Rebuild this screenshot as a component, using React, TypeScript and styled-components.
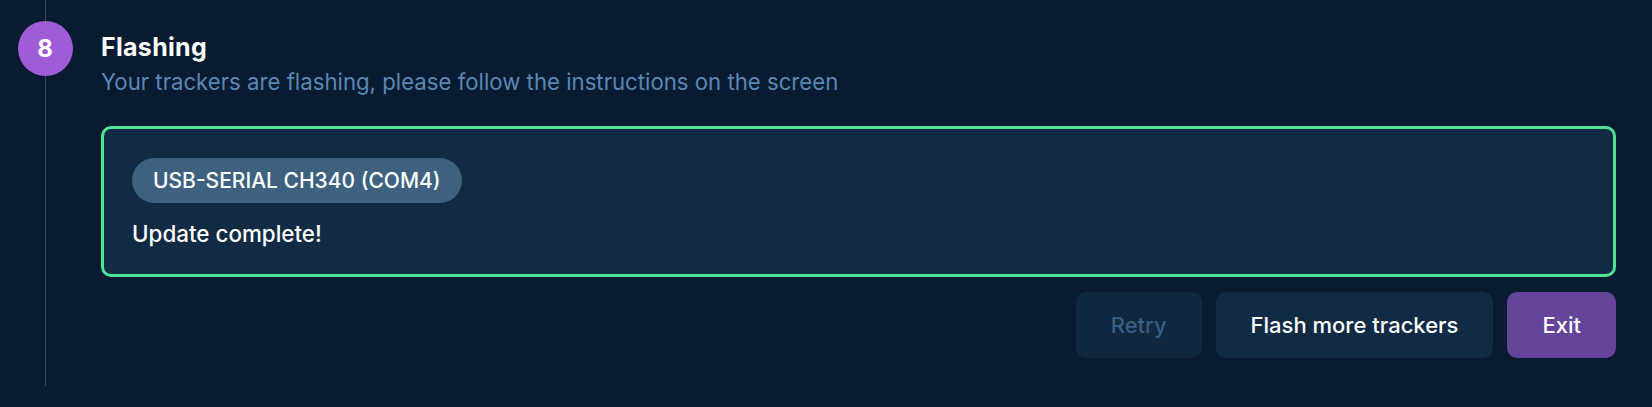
import React from "react";
import styled, { createGlobalStyle } from "styled-components";

const Global = createGlobalStyle`
  html, body {
    margin: 0;
    padding: 0;
    background: #081b30;
  }
  body {
    font-family: Inter, "Noto Sans", sans-serif;
    color: #ffffff;
  }
`;

const Page = styled.div`
  width: 1652px;
  height: 407px;
  box-sizing: border-box;
  padding: 0 36px 21px 0;
  background: #081b30;
  display: grid;
  grid-template-columns: 90px 1fr;
  column-gap: 11px;
`;

const Timeline = styled.div`
  display: flex;
  flex-direction: column;
  align-items: center;
`;

const Line = styled.div<{ $h?: number }>`
  width: 1px;
  background: #37465d;
  ${(p) => (p.$h ? `height: ${p.$h}px;` : `flex: 1;`)}
`;

const StepCircle = styled.div`
  width: 55px;
  height: 55px;
  border-radius: 50%;
  background: #a05bd6;
  color: #ffffff;
  font-weight: 700;
  font-size: 24px;
  display: flex;
  align-items: center;
  justify-content: center;
  flex-shrink: 0;
`;

const Content = styled.div`
  display: flex;
  flex-direction: column;
  padding-top: 33px;
`;

const Title = styled.h2`
  margin: 0;
  font-size: 25px;
  line-height: 28px;
  font-weight: 700;
  letter-spacing: 0.3px;
  color: #ffffff;
`;

const Subtitle = styled.p`
  margin: 7px 0 0;
  font-size: 22.2px;
  line-height: 28px;
  font-weight: 400;
  color: #5a88b6;
`;

const Card = styled.div`
  margin-top: 30px;
  border: 3px solid #4fe394;
  border-radius: 10px;
  background: #122b44;
  padding: 29px 28px 27px;
  display: flex;
  flex-direction: column;
  align-items: flex-start;
  gap: 18px;
`;

const Pill = styled.div`
  height: 45px;
  box-sizing: border-box;
  padding: 0 21px;
  border-radius: 23px;
  background: #3e6180;
  display: flex;
  align-items: center;
  font-size: 21px;
  font-weight: 500;
  color: #ffffff;
`;

const Status = styled.div`
  font-size: 22.4px;
  line-height: 26px;
  font-weight: 500;
  color: #ffffff;
`;

const Actions = styled.div`
  margin-top: 15px;
  display: flex;
  justify-content: flex-end;
  gap: 14px;
`;

const Button = styled.button<{ $variant: "disabled" | "secondary" | "primary" }>`
  height: 66px;
  padding: 0 35px;
  border: none;
  border-radius: 10px;
  font-family: inherit;
  font-size: 22px;
  font-weight: 500;
  cursor: pointer;
  background: ${(p) =>
    p.$variant === "primary" ? "#65459a" : p.$variant === "secondary" ? "#122b44" : "#0f2840"};
  color: ${(p) => (p.$variant === "disabled" ? "#395e81" : "#ffffff")};
`;

export default function App() {
  return (
    <>
      <Global />
      <Page>
        <Timeline>
          <Line $h={21} />
          <StepCircle>8</StepCircle>
          <Line />
        </Timeline>
        <Content>
          <Title>Flashing</Title>
          <Subtitle>Your trackers are flashing, please follow the instructions on the screen</Subtitle>
          <Card>
            <Pill>USB-SERIAL CH340 (COM4)</Pill>
            <Status>Update complete!</Status>
          </Card>
          <Actions>
            <Button $variant="disabled">Retry</Button>
            <Button $variant="secondary">Flash more trackers</Button>
            <Button $variant="primary">Exit</Button>
          </Actions>
        </Content>
      </Page>
    </>
  );
}
